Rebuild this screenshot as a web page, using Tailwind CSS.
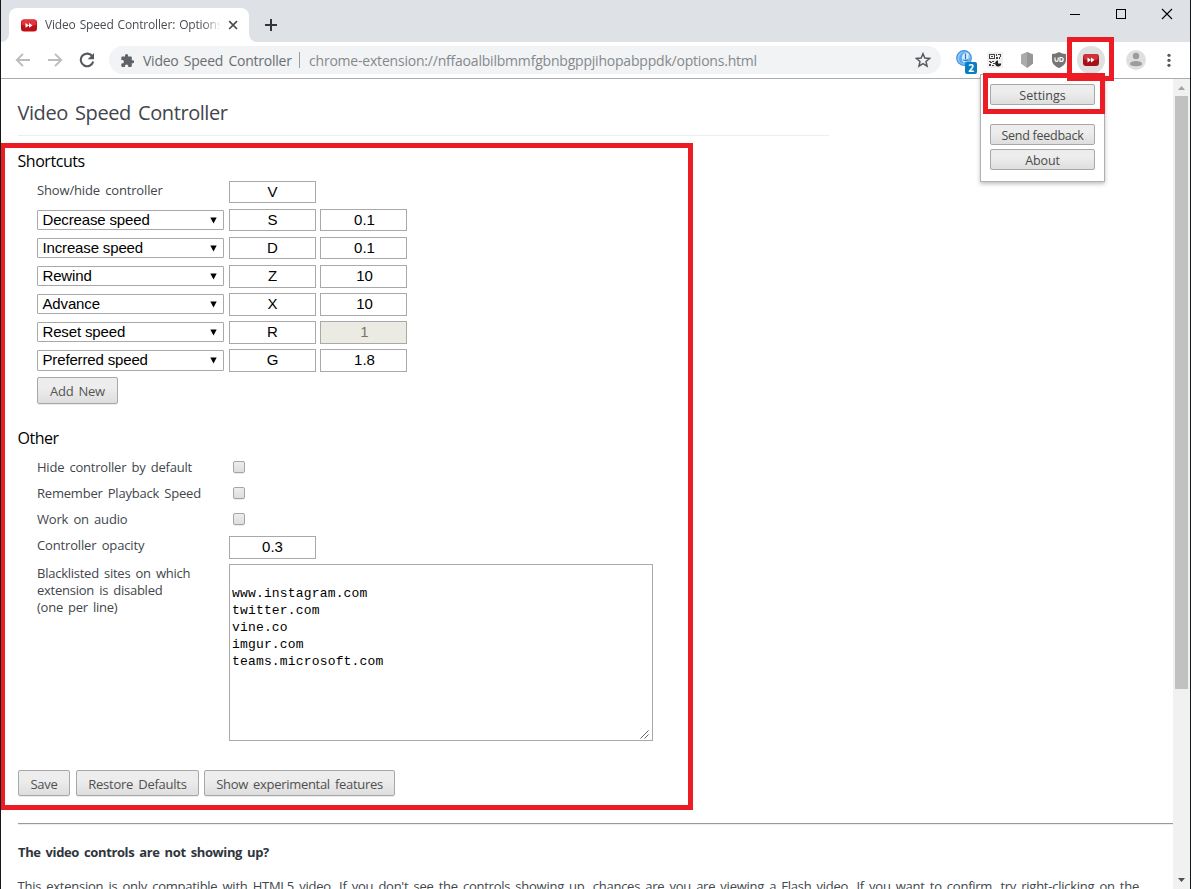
<!DOCTYPE html>
<html lang="en">
<head>
    <meta charset="UTF-8">
    <meta name="viewport" content="width=device-width, initial-scale=1.0">
    <title>Video Speed Controller: Options</title>
    <script src="https://cdn.jsdelivr.net/npm/@tailwindcss/browser@4"></script>
</head>
<body class="relative w-[1191px] h-[889px] overflow-hidden bg-white border-x border-[#15171a] font-['Open_Sans',sans-serif] text-[13px] leading-[17px] text-[#41464c]">
    <div class="flex flex-col h-full">

        <!-- Tab strip -->
        <div class="flex h-[42px] bg-[#dee1e6] shrink-0">
            <div class="flex items-end w-2 shrink-0">
                <div class="size-2 bg-white"><div class="size-2 bg-[#dee1e6] rounded-br-lg"></div></div>
            </div>
            <div class="flex items-center w-[240px] h-[34px] mt-2 pl-3 bg-white rounded-t-lg shrink-0">
                <svg class="w-4 h-4 shrink-0" viewBox="0 0 16 16">
                    <rect x="0" y="2.5" width="16" height="12" rx="3" fill="#bd0f1a"/>
                    <rect x="0.5" y="2.5" width="15" height="6" rx="3" fill="#e2343b"/>
                    <path d="M4.500 6l3.500 2.400-3.500 2.400zM8 6l3.500 2.400L8 10.800z" fill="#fff"/>
                </svg>
                <div class="ml-2 w-[176px] pb-0.5 overflow-hidden whitespace-nowrap text-[12px] tracking-[-0.16px] [word-spacing:1px] text-[#4a4e53] [mask-image:linear-gradient(to_right,black_158px,transparent_176px)]">Video Speed Controller: Options</div>
                <svg class="ml-1.5 w-3 h-3" viewBox="0 0 12 12" fill="none" stroke="#4a4d51" stroke-width="1.7">
                    <path d="M2.2 2.2l7.8 7.8M10 2.2l-7.8 7.8"/>
                </svg>
            </div>
            <div class="flex items-end w-2 shrink-0">
                <div class="size-2 bg-white"><div class="size-2 bg-[#dee1e6] rounded-bl-lg"></div></div>
            </div>
            <svg class="mt-[19px] ml-[8px] w-3 h-3" viewBox="0 0 12 12" stroke="#333639" stroke-width="2">
                <path d="M6 0v12M0 6h12"/>
            </svg>
            <div class="flex ml-auto mr-[17px] mt-2 gap-[34px]">
                <svg class="w-3 h-3" viewBox="0 0 12 12" stroke="#000" shape-rendering="crispEdges"><path d="M1 6.5h10"/></svg>
                <svg class="w-3 h-3" viewBox="0 0 12 12" fill="none" stroke="#000" shape-rendering="crispEdges"><path d="M1.5 1.5h9v9h-9z"/></svg>
                <svg class="w-3 h-3" viewBox="0 0 12 12" stroke="#000" stroke-width="1.1"><path d="M1 1l10 10M11 1L1 11"/></svg>
            </div>
        </div>

        <!-- Toolbar -->
        <div class="flex items-center h-[37px] pl-[14px] bg-white border-b border-[#a9acb0] shrink-0">
            <svg class="w-4 h-4" viewBox="0 0 16 16" fill="none" stroke="#babcbe" stroke-width="1.900"><path d="M15 8H2M8 1.800L1.800 8 8 14.200"/></svg>
            <svg class="ml-4 w-4 h-4" viewBox="0 0 16 16" fill="none" stroke="#babcbe" stroke-width="1.900"><path d="M1 8h13M8 1.800L14.200 8 8 14.200"/></svg>
            <svg class="ml-4 w-4 h-4" viewBox="0 0 16 16">
                <path d="M13.2 4.2A6.3 6.3 0 1 0 14.2 9.5" fill="none" stroke="#55585d" stroke-width="2.1"/>
                <path d="M15 1v6.3H8.7z" fill="#55585d"/>
            </svg>
            <div class="flex items-center ml-[14px] w-[832px] h-7 pl-3 rounded-full bg-[#f1f3f4] text-[14px] whitespace-nowrap">
                <svg class="w-[13px] h-[13px]" viewBox="1.5 1 21 21" fill="#5f6368">
                    <path d="M20.5 11H19V7c0-1.100-.9-2-2-2h-4V3.500a2.500 2.500 0 0 0-5 0V5H4c-1.100 0-2 .9-2 2v3.800h1.500a2.700 2.700 0 0 1 0 5.400H2V20c0 1.100.9 2 2 2h3.800v-1.500a2.700 2.700 0 0 1 5.400 0V22H17c1.100 0 2-.9 2-2v-4h1.500a2.500 2.500 0 0 0 0-5z"/>
                </svg>
                <span class="ml-[9px] w-[150px] tracking-[-0.25px] [word-spacing:2px] text-[#6a6e73]">Video Speed Controller</span>
                <span class="ml-[6px] w-px h-4 bg-[#9a9da1]"></span>
                <span class="ml-[9px] tracking-[-0.205px] text-[#85898e]">chrome-extension://nffaoalbilbmmfgbnbgppjihopabppdk/options.html</span>
                <svg class="ml-auto mr-[10px] w-4 h-4" viewBox="0 0 16 16" fill="none" stroke="#55585d" stroke-width="1.500">
                    <path d="M8 1.700l1.850 4.300 4.700.45-3.550 3.100 1.050 4.600L8 11.700l-4.050 2.450L5 9.550 1.450 6.450l4.700-.45z"/>
                </svg>
            </div>
            <div class="relative ml-[15px] w-[21px] h-5">
                <svg class="w-4 h-4" viewBox="0 0 16 16">
                    <circle cx="8" cy="8" r="7.300" fill="#8cc8f5" stroke="#3f8fe0" stroke-width="1.200"/>
                    <path d="M9 1.500C4 3 1.500 8 4.500 13 9 14.500 13 13 14 9z" fill="#5ba9ea"/>
                    <path d="M9.500 2.500C5.500 4 5 9 7 12c3 1 5-1 5.500-3V3.500z" fill="#d5edff"/>
                    <path d="M9.500 3.500v6M7 9.500c1 1.500 3.500 1.500 5 0" fill="none" stroke="#2b78cc" stroke-width="1.200"/>
                </svg>
                <span class="absolute left-[9px] top-3 w-3 h-3 rounded-[2px] bg-[#0a7dc2] text-white text-[10px] leading-[12px] font-bold text-center">2</span>
            </div>
            <svg class="ml-[10px] w-4 h-4" viewBox="0 0 16 16">
                <rect width="16" height="16" fill="#f1f1f1"/>
                <g fill="#444" shape-rendering="crispEdges">
                    <path d="M2 2h6v1H2zM2 6h6v1H2zM2 3h1v3H2zM7 3h1v3H7zM4 4h2v1H4zM9 2h1v2H9zM9 5h2v2H9zM11 2h3v1h-3zM13 3h1v2h-1zM12 5h1v2h-1zM2 9h2v1H2zM5 9h2v1H5zM3 10h2v1H3zM6 11h2v1H6zM2 12h2v2H2zM5 13h2v1H5z"/>
                </g>
                <path d="M11 8.500v3h3.200a3 3 0 1 1-3.200-3z" fill="#222"/>
            </svg>
            <svg class="ml-[16px] w-4 h-4" viewBox="0 0 16 16">
                <path d="M8 0l6 2.500v9L8 16l-6-4.500v-9z" fill="#ababab"/>
                <path d="M8 0l6 2.500v9L8 16z" fill="#969696"/>
            </svg>
            <svg class="ml-[16px] w-4 h-4" viewBox="0 0 16 16">
                <path d="M8 0c2 1.300 4.500 2 7 2v6c0 4-3.500 6.500-7 8-3.500-1.500-7-4-7-8V2c2.500 0 5-.7 7-2z" fill="#757575"/>
                <path d="M4 5.500v2.200c0 2.200 3.200 2.200 3.200 0V5.500M9 5.500h1.300c2.600 0 2.600 3.900 0 3.900H9z" fill="none" stroke="#fff" stroke-width="1.200"/>
            </svg>
            <div class="flex items-center justify-center ml-[10px] size-7 rounded-full bg-[#dfe0e1]">
                <svg class="w-4 h-4" viewBox="0 0 16 16">
                    <rect x="0" y="2" width="16" height="12" rx="3" fill="#a90f19"/>
                    <rect x="0.500" y="2" width="15" height="6" rx="3" fill="#cf333a"/>
                    <path d="M4.500 5.600L8 8l-3.500 2.400zM8 5.600L11.500 8 8 10.400z" fill="#fff"/>
                </svg>
            </div>
            <svg class="ml-[21px] w-5 h-5" viewBox="0 0 20 20">
                <circle cx="10" cy="10" r="10" fill="#dfdfe0"/>
                <circle cx="10" cy="6" r="3.200" fill="#9c9c9e"/>
                <path d="M4 14c0-4 12-4 12 0 0 3-12 3-12 0z" fill="#9c9c9e"/>
            </svg>
            <svg class="ml-[20.5px] w-1 h-4" viewBox="0 0 4 16" fill="#55585d"><circle cx="2" cy="3.300" r="1.600"/><circle cx="2" cy="8.300" r="1.600"/><circle cx="2" cy="13.300" r="1.600"/></svg>
        </div>

        <!-- Options page -->
        <div class="flex flex-1 min-h-0">
            <div class="flex-1 min-w-0 pl-[17px] overflow-hidden tracking-[-0.25px] [word-spacing:2px]">
                <h1 class="w-[811px] h-[57px] pt-5 border-b border-[#eee] text-[20px] leading-[28px] tracking-[-0.43px] [word-spacing:2.5px]"><span class="-ml-[0.5px]">Video Speed Controller</span></h1>

                <h3 class="-ml-[0.5px] mt-[15px] text-[16px] leading-[20px] tracking-[-0.45px] text-black">Shortcuts</h3>
                <div class="flex ml-[19px] mt-[10px] h-[28px] font-['Liberation_Sans',sans-serif]">
                    <label class="w-[192px] pt-px tracking-[-0.15px] font-['Open_Sans',sans-serif]">Show/hide controller</label>
                    <input class="w-[87px] h-[22px] pb-0.5 border border-[#a9a9a9] text-center text-[15px] tracking-normal text-black" type="text" value="V">
                </div>
                <div id="shortcuts" class="ml-[19px] font-['Liberation_Sans',sans-serif] text-[15px] tracking-[-0.15px] [word-spacing:0px] text-black"></div>
                <button class="block ml-[19px] w-[81px] h-[27px] pt-px rounded-[2px] border border-[#a8a8a8] bg-linear-to-b from-[#ededed] from-38% to-[#dedede] shadow-[0_1px_0_rgba(0,0,0,0.08)] text-[#555] tracking-[-0.25px] [word-spacing:2px]">Add New</button>

                <h3 class="-ml-[0.5px] mt-[24px] text-[16px] leading-[20px] tracking-[-0.5px] text-black">Other</h3>
                <div class="ml-[19px] mt-[10px]">
                    <div class="flex h-[26px]">
                        <label class="w-[196px] pt-px tracking-[-0.21px]">Hide controller by default</label>
                        <input type="checkbox" class="appearance-none mt-[3px] size-3 rounded-[2px] border border-[#a5a5a5] bg-linear-to-b from-[#ededed] to-[#dedede] shadow-[0_1px_0_rgba(0,0,0,0.08)]">
                    </div>
                    <div class="flex h-[26px]">
                        <label class="w-[196px] pt-px tracking-[-0.21px]">Remember Playback Speed</label>
                        <input type="checkbox" class="appearance-none mt-[3px] size-3 rounded-[2px] border border-[#a5a5a5] bg-linear-to-b from-[#ededed] to-[#dedede] shadow-[0_1px_0_rgba(0,0,0,0.08)]">
                    </div>
                    <div class="flex h-[26px]">
                        <label class="w-[196px] pt-px tracking-[-0.18px]">Work on audio</label>
                        <input type="checkbox" class="appearance-none mt-[3px] size-3 rounded-[2px] border border-[#a5a5a5] bg-linear-to-b from-[#ededed] to-[#dedede] shadow-[0_1px_0_rgba(0,0,0,0.08)]">
                    </div>
                    <div class="flex h-[28px]">
                        <label class="w-[192px] pt-px tracking-[-0.15px]">Controller opacity</label>
                        <input class="w-[87px] h-[23px] pb-0.5 border border-[#a9a9a9] text-center font-['Liberation_Sans',sans-serif] text-[15px] tracking-normal text-black" type="text" value="0.3">
                    </div>
                    <div class="flex">
                        <label class="w-[192px] pt-px">Blacklisted sites on which<br>extension is disabled<br>(one per line)</label>
                        <div class="relative w-[424px] h-[177px]">
                            <textarea class="block w-full h-full px-[2px] pt-[3px] resize-none border border-[#a9a9a9] font-['Liberation_Mono',monospace] text-[13px] leading-[17px] tracking-[0.17px] [word-spacing:0px] text-black" spellcheck="false">

www.instagram.com
twitter.com
vine.co
imgur.com
teams.microsoft.com</textarea>
                            <svg class="absolute right-1 bottom-[2px] w-[9px] h-[9px]" viewBox="0 0 9 9" stroke="#666"><path d="M0.500 8.500l8-8M4.500 8.500l4-4"/></svg>
                        </div>
                    </div>
                </div>

                <div class="flex mt-[29px] text-[#505050]">
                    <button class="w-[52px] h-[26px] pt-[3px] rounded-[2px] border border-[#a8a8a8] bg-linear-to-b from-[#ededed] from-38% to-[#dedede] shadow-[0_1px_0_rgba(0,0,0,0.08)]">Save</button>
                    <button class="ml-1.5 w-[123px] h-[26px] pt-[3px] rounded-[2px] border border-[#a8a8a8] bg-linear-to-b from-[#ededed] from-38% to-[#dedede] shadow-[0_1px_0_rgba(0,0,0,0.08)] [word-spacing:2px]">Restore Defaults</button>
                    <button class="ml-[5px] w-[191px] h-[26px] pt-[3px] rounded-[2px] border border-[#a8a8a8] bg-linear-to-b from-[#ededed] from-38% to-[#dedede] shadow-[0_1px_0_rgba(0,0,0,0.08)] tracking-[-0.3px] [word-spacing:2px]">Show experimental features</button>
                </div>

                <hr class="mt-[27px] h-[2px] border-0 border-t border-[#9a9a9a] bg-[#eee]">
                <h4 class="mt-[19px] font-bold tracking-[-0.38px] text-[#2f353c]">The video controls are not showing up?</h4>
                <p class="-ml-[0.5px] mt-[17px] whitespace-nowrap">This extension is only compatible with HTML5 video. If you don't see the controls showing up, chances are you are viewing a Flash video. If you want to confirm, try right-clicking on the</p>
            </div>

            <!-- Scrollbar -->
            <div class="flex flex-col items-center w-[17px] bg-[#f1f1f1] shrink-0">
                <svg class="w-[17px] h-[17px] shrink-0" viewBox="0 0 17 17" fill="#a3a3a3"><path d="M5 11h7L8.500 7z"/></svg>
                <div class="w-[13px] h-[593px] bg-[#c1c1c1]"></div>
                <svg class="mt-auto w-[17px] h-[17px] shrink-0" viewBox="0 0 17 17" fill="#505050"><path d="M5 6h7L8.500 10z"/></svg>
            </div>
        </div>
    </div>

    <!-- Extension popup -->
    <div class="absolute left-[979px] top-[74px] flex flex-col w-[125px] h-[108px] px-[9px] pt-[9px] bg-white border border-[#b0b0b0] shadow-[0_2px_4px_rgba(0,0,0,0.25)] text-[12.5px] leading-[18px] text-[#4a4a4a]">
        <button class="h-[21px] pt-px leading-[19px] rounded-[2px] border border-[#a8a8a8] bg-linear-to-b from-[#ededed] from-38% to-[#dedede]">Settings</button>
        <button class="mt-[19px] h-[21px] pt-px leading-[19px] rounded-[2px] border border-[#a8a8a8] bg-linear-to-b from-[#ededed] from-38% to-[#dedede] tracking-[-0.27px]">Send feedback</button>
        <button class="mt-1 h-[21px] pt-px leading-[19px] rounded-[2px] border border-[#a8a8a8] bg-linear-to-b from-[#ededed] from-38% to-[#dedede] tracking-[-0.1px]">About</button>
    </div>

    <!-- Highlights -->
    <div class="absolute left-[-1px] top-[143px] w-[693px] h-[667px] border-5 border-[#ed1c24]"></div>
    <div class="absolute left-[1066px] top-[37px] w-[47px] h-[44px] border-5 border-[#ed1c24]"></div>
    <div class="absolute left-[982px] top-[73px] w-[122px] h-[41px] border-5 border-[#ed1c24]"></div>

    <script>
        const shortcuts = [
            ['Decrease speed', 'S', '0.1'],
            ['Increase speed', 'D', '0.1'],
            ['Rewind', 'Z', '10'],
            ['Advance', 'X', '10'],
            ['Reset speed', 'R', '1'],
            ['Preferred speed', 'G', '1.8'],
        ];

        document.getElementById('shortcuts').innerHTML = shortcuts.map(([action, key, value], i) => {
            const height = i < 2 ? 'h-[22px]' : 'h-[23px]';
            return `
            <div class="flex h-7">
                <div class="flex items-center justify-between mt-px w-[187px] ${i === 5 ? 'h-[21px]' : 'h-5'} pl-[4.5px] pr-[6px] border border-[#a9a9a9] rounded-[1px]">
                    <span class="pb-0.5">${action}</span>
                    <svg class="w-[7px] h-[7px]" viewBox="0 0 7 7"><path d="M0.300 0.500h6.400L3.500 6.500z"/></svg>
                </div>
                <input class="ml-[5px] w-[87px] ${height} pb-0.5 border border-[#a9a9a9] text-center tracking-normal" type="text" value="${key}">
                <input class="ml-1 w-[87px] ${height} pb-0.5 pl-0.5 border border-[#a9a9a9] text-center tracking-normal disabled:bg-[#ebebe4] disabled:text-[#7b7166]" type="text" value="${value}" ${value === '1' ? 'disabled' : ''}>
            </div>`;
        }).join('');
    </script>
</body>
</html>
